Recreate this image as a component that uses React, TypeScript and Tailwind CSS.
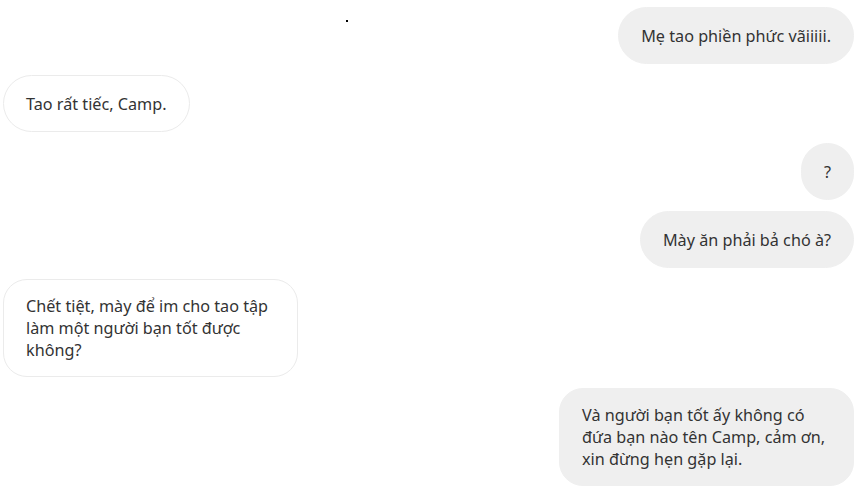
import React from "react";

type Msg = { me: boolean; lines: string[] };

const messages: Msg[] = [
  { me: true, lines: ["Mẹ tao phiền phức vãiiiii."] },
  { me: false, lines: ["Tao rất tiếc, Camp."] },
  { me: true, lines: ["?"] },
  { me: true, lines: ["Mày ăn phải bả chó à?"] },
  {
    me: false,
    lines: ["Chết tiệt, mày để im cho tao tập", "làm một người bạn tốt được", "không?"],
  },
  {
    me: true,
    lines: ["Và người bạn tốt ấy không có", "đứa bạn nào tên Camp, cảm ơn,", "xin đừng hẹn gặp lại."],
  },
];

function Bubble({ me, lines }: Msg) {
  const multi = lines.length > 1;
  return (
    <div className={`flex ${me ? "justify-end" : "justify-start"}`}>
      <div
        className={`px-[22px] text-[16.2px] leading-[22px] text-[#333333] whitespace-nowrap ${
          multi ? "w-[295px] py-[15px] rounded-[24px]" : "h-[57px] flex items-center rounded-full"
        } ${me ? "bg-[#efefef] border border-[#efefef]" : "bg-white border border-[#ebebeb]"}`}
      >
        {multi ? lines.map((l, i) => <div key={i}>{l}</div>) : lines[0]}
      </div>
    </div>
  );
}

export default function App() {
  return (
    <div
      className="relative w-[860px] h-[492px] bg-white overflow-hidden pt-[7px] pl-[3px] pr-[6px] flex flex-col gap-[11px]"
      style={{ fontFamily: '"Segoe UI", "Noto Sans", sans-serif' }}
    >
      <div className="absolute left-[346px] top-[20px] w-[2px] h-[2px] bg-black"></div>
      {messages.map((m, i) => (
        <Bubble key={i} {...m} />
      ))}
    </div>
  );
}
